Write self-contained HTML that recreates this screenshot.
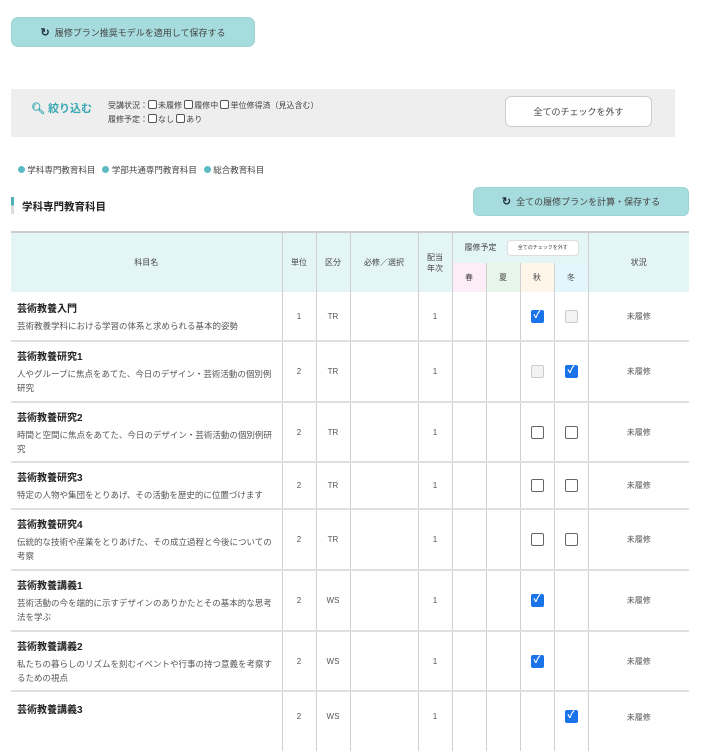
<!DOCTYPE html>
<html><head><meta charset="utf-8"><style>
*{box-sizing:border-box;margin:0;padding:0}
body{width:701px;height:716px;overflow:hidden;background:#fff;font-family:"Liberation Sans","Noto Sans CJK JP",sans-serif;color:#333;position:relative}
.btn{position:absolute;background:#a6dcdd;border:1px solid #9ad3d4;border-radius:7px;font-size:9px;color:#444;display:flex;align-items:center;justify-content:center;gap:5px}
.ico{font-size:11px;color:#234;font-weight:bold}
.filter{position:absolute;left:11px;top:89px;width:664px;height:48px;background:#eee}
.cb{display:inline-block;width:9px;height:9px;border:1px solid #555;border-radius:2px;vertical-align:-1px;margin-right:1px;background:#fff}
table{position:absolute;left:11px;top:231px;width:678px;border-collapse:collapse;table-layout:fixed;font-size:8px}
td,th{border-left:1px solid #d0d0d0;border-right:1px solid #d0d0d0;text-align:center;font-weight:normal;color:#555}
tr.b td{border-bottom:2px solid #e0e0e0}
th{background:#e4f5f6;color:#444}
td:first-child,th:first-child{border-left:none}
td:last-child,th:last-child{border-right:none}
.nm{text-align:left;padding:0 6px}
.nm b{display:block;font-size:10px;color:#222;margin-bottom:4px}
.nm span{font-size:8.5px;color:#555;line-height:14px}
.k{display:inline-block;width:13px;height:13px;border:1.5px solid #666;border-radius:2px;background:#fff;vertical-align:middle}
.k.on{background:#1a73e8;border-color:#1a73e8;color:#fff;font-size:10px;line-height:10px;font-weight:bold}
.k.dis{border:1px solid #ccc;background:#f3f3f3}
.dot{display:inline-block;width:7px;height:7px;border-radius:50%;background:#5bbac3;vertical-align:0}
</style></head><body>
<div class="btn" style="left:11px;top:17px;width:244px;height:30px"><span class="ico">↻</span>履修プラン推奨モデルを適用して保存する</div>
<div class="filter">
 <div style="position:absolute;left:20px;top:11px;color:#3aa8b4;font-weight:bold;font-size:11px">🔍︎ 絞り込む</div>
 <div style="position:absolute;left:97px;top:10px;font-size:8px;line-height:14px;color:#444">受講状況：<span class="cb"></span>未履修 <span class="cb"></span>履修中 <span class="cb"></span>単位修得済（見込含む）<br>履修予定：<span class="cb"></span>なし <span class="cb"></span>あり</div>
 <div style="position:absolute;left:494px;top:7px;width:147px;height:31px;background:#fff;border:1px solid #ccc;border-radius:6px;font-size:9px;display:flex;align-items:center;justify-content:center;color:#444">全てのチェックを外す</div>
</div>
<div style="position:absolute;left:18px;top:164px;font-size:8.5px;color:#444"><span class="dot"></span> 学科専門教育科目 &nbsp; <span class="dot"></span> 学部共通専門教育科目 &nbsp; <span class="dot"></span> 総合教育科目</div>
<div style="position:absolute;left:11px;top:197px;width:3px;height:17px;background:linear-gradient(#4fb0b8 50%,#ddd 50%)"></div>
<div style="position:absolute;left:22px;top:199px;font-size:10.5px;font-weight:bold;color:#222">学科専門教育科目</div>
<div class="btn" style="left:473px;top:187px;width:216px;height:29px;border-radius:6px"><span class="ico">↻</span>全ての履修プランを計算・保存する</div>
<table>
<colgroup><col style="width:271px"><col style="width:34px"><col style="width:34px"><col style="width:68px"><col style="width:34px"><col style="width:34px"><col style="width:34px"><col style="width:34px"><col style="width:34px"><col style="width:101px"></colgroup>
<tr style="height:31px"><th rowspan="2" style="border-top:2px solid #ccc">科目名</th><th rowspan="2" style="border-top:2px solid #ccc">単位</th><th rowspan="2" style="border-top:2px solid #ccc">区分</th><th rowspan="2" style="border-top:2px solid #ccc">必修／選択</th><th rowspan="2" style="border-top:2px solid #ccc">配当<br>年次</th><th colspan="4" style="border-top:2px solid #ccc;text-align:left;padding-left:12px">履修予定 <span style="display:inline-block;margin-left:8px;width:72px;height:16px;background:#fff;border:1px solid #ddd;border-radius:4px;font-size:5px;line-height:14px;text-align:center;vertical-align:middle">全てのチェックを外す</span></th><th rowspan="2" style="border-top:2px solid #ccc">状況</th></tr>
<tr style="height:29px"><th style="background:#fcedf7">春</th><th style="background:#e6f6e9">夏</th><th style="background:#fdf6e9">秋</th><th style="background:#e2f6fb">冬</th></tr>
<tr class="b" style="height:49px"><td class="nm"><b>芸術教養入門</b><span>芸術教養学科における学習の体系と求められる基本的姿勢</span></td><td>1</td><td>TR</td><td></td><td>1</td><td></td><td></td><td><span class="k on">✓</span></td><td><span class="k dis"></span></td><td>未履修</td></tr>
<tr class="b" style="height:61px"><td class="nm"><b>芸術教養研究1</b><span>人やグループに焦点をあてた、今日のデザイン・芸術活動の個別例研究</span></td><td>2</td><td>TR</td><td></td><td>1</td><td></td><td></td><td><span class="k dis"></span></td><td><span class="k on">✓</span></td><td>未履修</td></tr>
<tr class="b" style="height:60px"><td class="nm"><b>芸術教養研究2</b><span>時間と空間に焦点をあてた、今日のデザイン・芸術活動の個別例研究</span></td><td>2</td><td>TR</td><td></td><td>1</td><td></td><td></td><td><span class="k"></span></td><td><span class="k"></span></td><td>未履修</td></tr>
<tr class="b" style="height:47px"><td class="nm"><b>芸術教養研究3</b><span>特定の人物や集団をとりあげ、その活動を歴史的に位置づけます</span></td><td>2</td><td>TR</td><td></td><td>1</td><td></td><td></td><td><span class="k"></span></td><td><span class="k"></span></td><td>未履修</td></tr>
<tr class="b" style="height:61px"><td class="nm"><b>芸術教養研究4</b><span>伝統的な技術や産業をとりあげた、その成立過程と今後についての考察</span></td><td>2</td><td>TR</td><td></td><td>1</td><td></td><td></td><td><span class="k"></span></td><td><span class="k"></span></td><td>未履修</td></tr>
<tr class="b" style="height:61px"><td class="nm"><b>芸術教養講義1</b><span>芸術活動の今を端的に示すデザインのありかたとその基本的な思考法を学ぶ</span></td><td>2</td><td>WS</td><td></td><td>1</td><td></td><td></td><td><span class="k on">✓</span></td><td></td><td>未履修</td></tr>
<tr class="b" style="height:60px"><td class="nm"><b>芸術教養講義2</b><span>私たちの暮らしのリズムを刻むイベントや行事の持つ意義を考察するための視点</span></td><td>2</td><td>WS</td><td></td><td>1</td><td></td><td></td><td><span class="k on">✓</span></td><td></td><td>未履修</td></tr>
<tr style="height:60px"><td class="nm" style="vertical-align:top;padding-top:9px"><b>芸術教養講義3</b></td><td style="vertical-align:top;padding-top:20px">2</td><td style="vertical-align:top;padding-top:20px">WS</td><td></td><td style="vertical-align:top;padding-top:20px">1</td><td></td><td></td><td></td><td style="vertical-align:top;padding-top:18px"><span class="k on">✓</span></td><td style="vertical-align:top;padding-top:20px">未履修</td></tr>
</table>
</body></html>
